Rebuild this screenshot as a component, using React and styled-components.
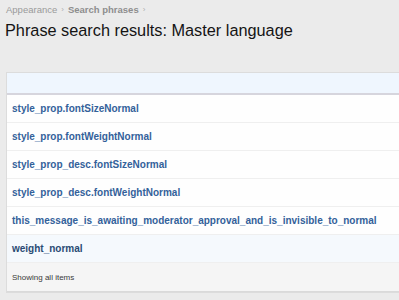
import styled, { createGlobalStyle } from "styled-components";

const GlobalStyle = createGlobalStyle`
  html, body {
    margin: 0;
    padding: 0;
    background: #ebebeb;
    font-family: "Liberation Sans", Arial, sans-serif;
    overflow: hidden;
  }
`;

const Page = styled.div`
  width: 399px;
  height: 300px;
  padding: 3px 0 0 6px;
  box-sizing: border-box;
`;

const Breadcrumb = styled.div`
  display: flex;
  align-items: center;
  gap: 4px;
  font-size: 9.5px;
  height: 12px;
`;

const Crumb = styled.span`
  font-weight: ${(p) => (p.current ? "bold" : "normal")};
  color: ${(p) => (p.current ? "#8e8e8e" : "#9a9a9a")};
`;

const Sep = styled.span`
  font-size: 8px;
  color: #b0b0b0;
`;

const Title = styled.h1`
  margin: 5px 0 0 -1px;
  font-size: 16.3px;
  font-weight: normal;
  color: #141414;
  line-height: 20px;
`;

const Panel = styled.div`
  margin-top: 32px;
  background: #fefefe;
  border: 1px solid #dcdcdc;
  border-right: none;
`;

const Header = styled.div`
  height: 20px;
  background: #eff6fe;
  border-bottom: 2px solid #d6d5dd;
`;

const Row = styled.div`
  height: 27px;
  display: flex;
  align-items: center;
  padding-left: 5px;
  border-bottom: 1px solid #efefef;
  background: ${(p) => (p.hover ? "#f5f9fd" : "#fefefe")};
`;

const Phrase = styled.a`
  font-size: 10px;
  font-weight: bold;
  color: ${(p) => (p.hover ? "#294b74" : "#33619a")};
  text-decoration: none;
  white-space: nowrap;
`;

const Footer = styled.div`
  height: 28px;
  display: flex;
  align-items: center;
  padding-left: 5px;
  background: #f5f5f5;
  border-bottom: 1px solid #dadada;
  font-size: 8px;
  color: #3a3a3a;
`;

const phrases = [
  "style_prop.fontSizeNormal",
  "style_prop.fontWeightNormal",
  "style_prop_desc.fontSizeNormal",
  "style_prop_desc.fontWeightNormal",
  "this_message_is_awaiting_moderator_approval_and_is_invisible_to_normal",
  "weight_normal",
];

export default function App() {
  return (
    <Page>
      <GlobalStyle />
      <Breadcrumb>
        <Crumb>Appearance</Crumb>
        <Sep>›</Sep>
        <Crumb current>Search phrases</Crumb>
        <Sep>›</Sep>
      </Breadcrumb>
      <Title>Phrase search results: Master language</Title>
      <Panel>
        <Header />
        {phrases.map((p, i) => (
          <Row key={p} hover={i === phrases.length - 1}>
            <Phrase href="#" hover={i === phrases.length - 1}>
              {p}
            </Phrase>
          </Row>
        ))}
        <Footer>Showing all items</Footer>
      </Panel>
    </Page>
  );
}
